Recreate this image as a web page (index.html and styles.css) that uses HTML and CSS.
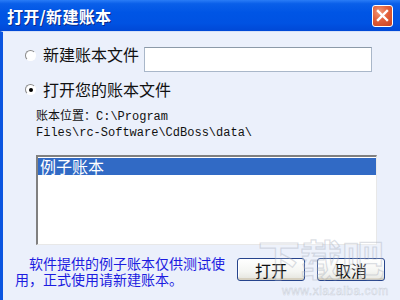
FILE: index.html
```html
<!DOCTYPE html>
<html lang="zh-CN">
<head>
<meta charset="utf-8">
<link rel="stylesheet" href="styles.css">
</head>
<body>
<div class="window">
  <div class="titlebar">
    <span class="title">打开/新建账本</span>
    <span class="close">
      <svg width="13" height="13" viewBox="0 0 13 13"><path d="M2 2 L11 11 M11 2 L2 11" stroke="#fff" stroke-width="2.4" stroke-linecap="square"/></svg>
    </span>
  </div>
  <div class="client">
    <div class="row row-new">
      <span class="radio"></span>
      <span class="label">新建账本文件</span>
      <span class="field"></span>
    </div>
    <div class="row row-open">
      <span class="radio checked"></span>
      <span class="label">打开您的账本文件</span>
    </div>
    <div class="path">账本位置：C:\Program<br>Files\rc-Software\CdBoss\data\</div>
    <div class="list">
      <div class="item selected">例子账本</div>
    </div>
    <div class="footer">
      <p class="note">软件提供的例子账本仅供测试使用，正式使用请新建账本。</p>
      <div class="buttons">
        <span class="btn">打开</span>
        <span class="btn">取消</span>
      </div>
    </div>
    <span class="wm-big">下载吧</span>
    <span class="wm-url">www.xiazaiba.com</span>
  </div>
</div>
</body>
</html>
```
FILE: styles.css
```css
html, body {
  margin: 0;
  padding: 0;
  width: 400px;
  height: 300px;
  overflow: hidden;
  background: #ebf0fb;
}

.window {
  width: 400px;
  height: 300px;
  display: flex;
  flex-direction: column;
  font-family: "Noto Sans CJK SC", sans-serif;
}

.titlebar {
  height: 31px;
  flex: none;
  display: flex;
  align-items: center;
  justify-content: space-between;
  padding: 0 7px 0 7px;
  background: linear-gradient(to bottom, #2a7cf6 0%, #0a5fe9 12%, #0055e5 40%, #0052e2 75%, #0048d6 100%);
  box-sizing: border-box;
}

.title {
  color: #fff;
  font-weight: bold;
  font-size: 16px;
  line-height: 18px;
  letter-spacing: 0.3px;
  text-shadow: 1px 1px 0 #0a2a8a;
  margin-top: 1px;
}

.close {
  width: 19px;
  height: 20px;
  border: 1px solid #fff;
  border-radius: 3px;
  background: radial-gradient(circle at 35% 30%, #f29a7a 0%, #e3603a 45%, #c8401e 100%);
  display: flex;
  align-items: center;
  justify-content: center;
}

.client {
  position: relative;
  flex: 1;
  border-left: 3px solid #0b55e0;
  border-top: 1px solid #d6e0f6;
  padding: 13px 0 0 22px;
  box-sizing: border-box;
  background: #ebf0fb;
}

.row {
  display: flex;
  align-items: flex-start;
}

.row-new {
  height: 27px;
}

.row-new .radio {
  margin-top: 5px;
}

.row-open {
  margin-top: 8px;
}

.row-open .radio {
  margin-top: 4px;
}

.radio {
  width: 9px;
  height: 9px;
  border-radius: 50%;
  border: 1px solid #8a8a8a;
  border-right-color: #fff;
  border-bottom-color: #fff;
  background: #fff;
  margin-right: 7px;
  position: relative;
  flex: none;
}

.radio.checked::after {
  content: "";
  position: absolute;
  left: 2.5px;
  top: 2.5px;
  width: 4px;
  height: 4px;
  border-radius: 50%;
  background: #000;
}

.label {
  font-size: 16px;
  line-height: 18px;
  color: #111;
}

.field {
  margin-left: 5px;
  margin-top: 2px;
  width: 226px;
  height: 23px;
  background: #fff;
  border: 1px solid #a9b7c9;
  border-top-color: #8c9aa8;
}

.path {
  margin: 11px 0 0 11px;
  font-family: "Liberation Mono", "Noto Sans CJK SC", monospace;
  font-size: 12px;
  line-height: 16px;
  color: #111;
}

.list {
  margin: 14px 0 0 11px;
  width: 341px;
  height: 90px;
  background: #fff;
  border-left: 2px solid #808080;
  border-top: 2px solid #808080;
  border-right: 1px solid #e8e8e8;
  border-bottom: 1px solid #e8e8e8;
  box-sizing: border-box;
}

.item {
  height: 17px;
  line-height: 17px;
  font-size: 16px;
  padding-left: 2px;
  margin-top: 1px;
}

.item.selected {
  background: #316ac5;
  color: #fff;
}

.footer {
  display: flex;
  align-items: flex-start;
  margin: 10px 0 0 -10px;
}

.note {
  margin: 0;
  width: 212px;
  flex: none;
  font-size: 14px;
  line-height: 16px;
  text-indent: 14px;
  color: #1c1ce0;
}

.buttons {
  display: flex;
  gap: 12px;
  margin-left: 10px;
  margin-top: 3px;
}

.btn {
  width: 66px;
  height: 21px;
  border: 1px solid #26448c;
  border-radius: 3px;
  background: linear-gradient(to bottom, #ffffff 0%, #f4f5f2 60%, #e3e3dc 100%);
  box-shadow: inset 0 -2px 0 #d6d0c0, inset 1px 0 0 #fff;
  display: flex;
  align-items: center;
  justify-content: center;
  font-size: 16px;
  color: #111;
}

.wm-big {
  position: absolute;
  left: 255px;
  top: 205px;
  font-size: 42px;
  line-height: 42px;
  font-weight: bold;
  color: rgba(255, 255, 255, 0.2);
  -webkit-text-stroke: 1.2px rgba(165, 172, 185, 0.4);
  pointer-events: none;
}

.wm-url {
  position: absolute;
  left: 279px;
  top: 253px;
  font-family: "Liberation Sans", sans-serif;
  font-size: 12px;
  line-height: 13px;
  color: rgba(255, 255, 255, 0.5);
  -webkit-text-stroke: 0.5px rgba(165, 172, 185, 0.5);
  letter-spacing: 0.5px;
  pointer-events: none;
}
```
